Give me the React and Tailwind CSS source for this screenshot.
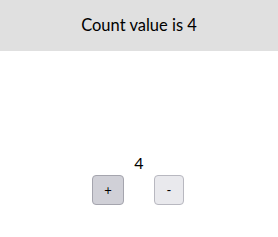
import React, { useState } from 'react';

export default function App() {
  const [count, setCount] = useState(4);

  return (
    <div className="min-h-screen bg-white text-black" style={{ fontFamily: 'Lato, "Noto Sans", sans-serif' }}>
      <header className="h-[51px] bg-[#e0e0e0] flex items-center justify-center">
        <h1 className="text-[16.5px] leading-none">Count value is {count}</h1>
      </header>
      <div className="pt-[100px] flex flex-col items-center">
        <div className="text-[16px] leading-6">{count}</div>
        <div className="flex gap-[30px] mr-[2px]">
          <button
            onClick={() => setCount(count + 1)}
            className="w-8 h-[30px] rounded-[4px] border border-[#a5a5ae] bg-[#d0d0d7] text-[13px] leading-none"
          >
            +
          </button>
          <button
            onClick={() => setCount(count - 1)}
            className="w-[30px] h-[30px] rounded-[4px] border border-[#b8b8c0] bg-[#e9e9ed] text-[13px] leading-none"
          >
            -
          </button>
        </div>
      </div>
    </div>
  );
}
